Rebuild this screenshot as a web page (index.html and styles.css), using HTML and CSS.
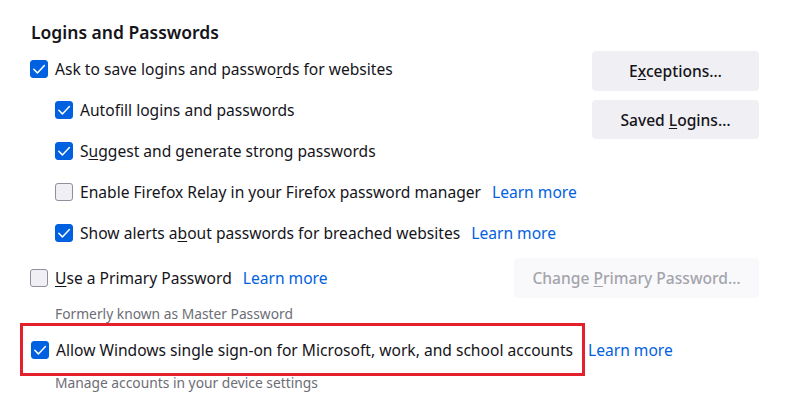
FILE: index.html
```html
<!DOCTYPE html>
<html>
<head>
<meta charset="utf-8">
<link rel="stylesheet" href="styles.css">
</head>
<body>
<div class="page">
  <h2 class="heading">Logins and Passwords</h2>
  <div class="top">
    <div class="checks">
      <div class="row">
        <span class="cb on"><svg viewBox="0 0 18 18"><path d="M3.8 9.3l3.6 3.6L14.4 5.6" /></svg></span>
        <span class="label">Ask to save logins and passwo<u>r</u>ds for websites</span>
      </div>
      <div class="row sub">
        <span class="cb on"><svg viewBox="0 0 18 18"><path d="M3.8 9.3l3.6 3.6L14.4 5.6" /></svg></span>
        <span class="label">Autof<u>i</u>ll logins and passwords</span>
      </div>
      <div class="row sub">
        <span class="cb on"><svg viewBox="0 0 18 18"><path d="M3.8 9.3l3.6 3.6L14.4 5.6" /></svg></span>
        <span class="label">S<u>u</u>ggest and generate strong passwords</span>
      </div>
      <div class="row sub">
        <span class="cb"></span>
        <span class="label">Enable Firefox Relay in your Firefox password manager</span>
        <a class="learn">Learn more</a>
      </div>
      <div class="row sub">
        <span class="cb on"><svg viewBox="0 0 18 18"><path d="M3.8 9.3l3.6 3.6L14.4 5.6" /></svg></span>
        <span class="label">Show alerts a<u>b</u>out passwords for breached websites</span>
        <a class="learn">Learn more</a>
      </div>
    </div>
    <div class="buttons">
      <button class="btn">E<u>x</u>ceptions…</button>
      <button class="btn">Saved <u>L</u>ogins…</button>
    </div>
  </div>
  <div class="row primary">
    <span class="cb"></span>
    <span class="label"><u>U</u>se a Primary Password</span>
    <a class="learn">Learn more</a>
    <span class="spacer"></span>
    <button class="btn disabled">Change <u>P</u>rimary Password…</button>
  </div>
  <div class="note">Formerly known as Master Password</div>
  <div class="row sso">
    <span class="highlight">
      <span class="cb on"><svg viewBox="0 0 18 18"><path d="M3.8 9.3l3.6 3.6L14.4 5.6" /></svg></span>
      <span class="label">Allow Windows single sign-on for Microsoft, work, and school accounts</span>
    </span>
    <a class="learn near">Learn more</a>
  </div>
  <div class="note last">Manage accounts in your device settings</div>
</div>
</body>
</html>
```
FILE: styles.css
```css
html, body {
  margin: 0;
  padding: 0;
  background: #ffffff;
}
body {
  font-family: "Noto Sans", "Open Sans", sans-serif;
  color: #15141a;
  font-size: 15.6px;
}
.page {
  width: 812px;
  height: 420px;
  box-sizing: border-box;
  padding: 20px 53px 0 30px;
  overflow: hidden;
}
.heading {
  margin: 0 0 4px 1px;
  font-size: 17.5px;
  font-weight: 600;
  line-height: 24px;
}
.top {
  display: flex;
  justify-content: space-between;
  align-items: flex-start;
}
.row {
  display: flex;
  align-items: center;
  height: 41px;
  white-space: nowrap;
}
.row.sub {
  padding-left: 25px;
}
.cb {
  width: 18px;
  height: 18px;
  box-sizing: border-box;
  border: 1px solid #8f8f9d;
  border-radius: 3px;
  background: #f0f0f4;
  margin-right: 7px;
  flex: none;
  display: flex;
}
.cb.on {
  background: #0061e0;
  border-color: #0061e0;
}
.cb svg {
  width: 18px;
  height: 18px;
  margin: -1px;
  flex: none;
}
.cb svg path {
  fill: none;
  stroke: #ffffff;
  stroke-width: 1.5;
  stroke-linecap: round;
  stroke-linejoin: round;
}
.label u, .btn u {
  text-decoration-thickness: 1px;
  text-underline-offset: 2px;
}
.learn {
  color: #0061e0;
  margin-left: 11px;
  cursor: pointer;
}
.learn.near {
  margin-left: 3px;
}
.buttons {
  display: flex;
  flex-direction: column;
  gap: 9px;
  padding-top: 3px;
}
.btn {
  font-family: inherit;
  font-size: 15.6px;
  font-weight: 500;
  color: #15141a;
  background: #f0f0f4;
  border: none;
  border-radius: 4px;
  width: 167px;
  height: 40px;
  padding: 0;
}
.buttons .btn:last-child {
  height: 39px;
}
.primary {
  height: 49px;
}
.spacer {
  flex: 1;
}
.btn.disabled {
  width: 245px;
  color: #a4a4ac;
  background: #f9f9fb;
}
.note {
  padding-left: 25px;
  font-size: 13.8px;
  color: #6d6d75;
  line-height: 24px;
  height: 21px;
}
.sso {
  height: 53px;
  margin-left: -10px;
}
.highlight {
  display: flex;
  align-items: center;
  height: 53px;
  box-sizing: border-box;
  border: 3px solid #e5202d;
  padding: 0 9px 0 8px;
}
.note.last {
  line-height: 14px;
  height: 14px;
}
```
